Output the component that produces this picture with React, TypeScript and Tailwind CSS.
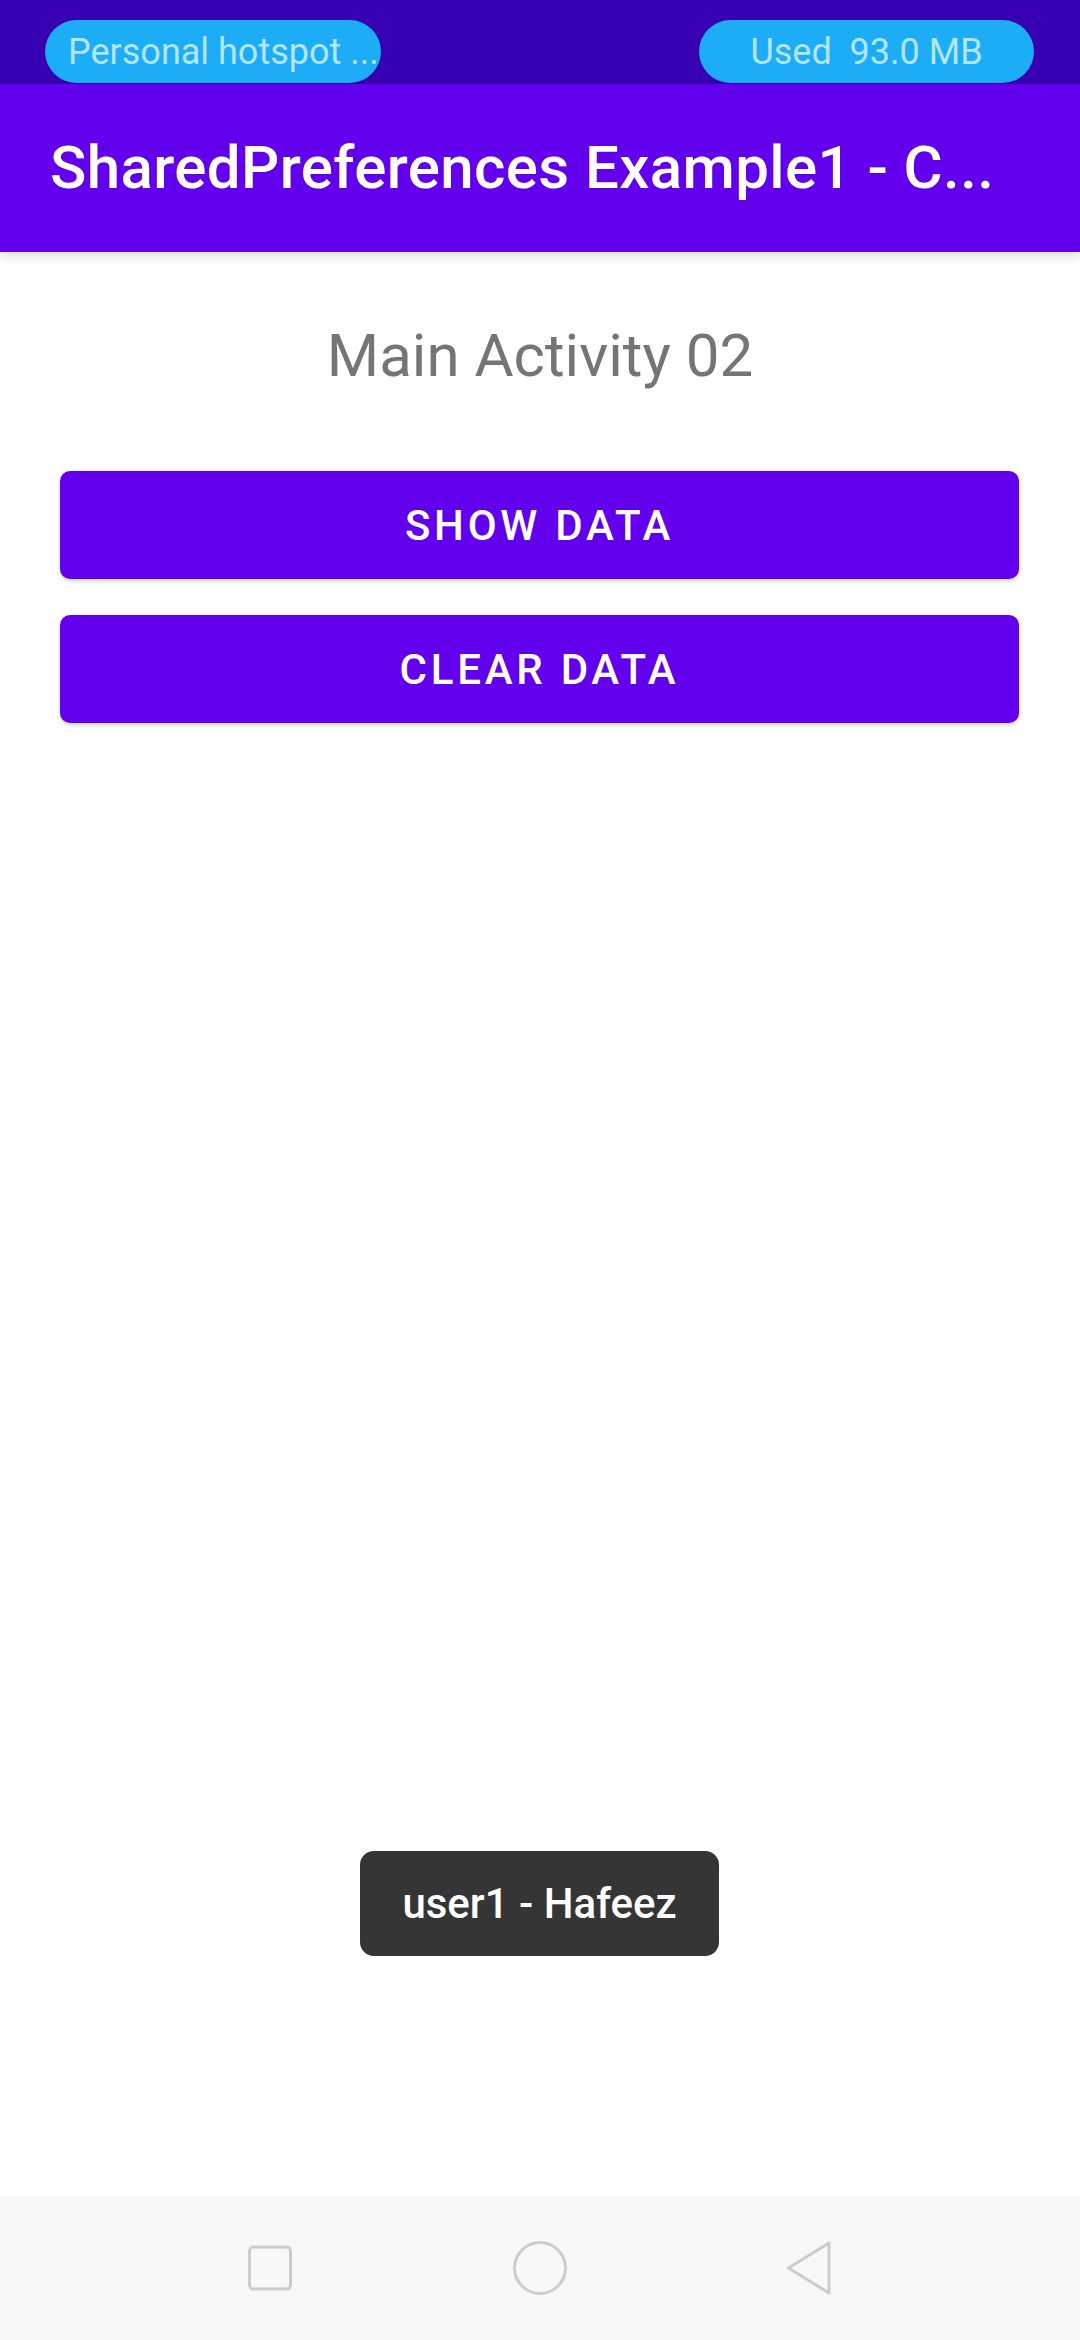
import React from "react";

export default function App() {
  return (
    <div
      className="relative w-[1080px] h-[2340px] bg-white flex flex-col overflow-hidden"
      style={{ fontFamily: "Roboto, 'Noto Sans', sans-serif" }}
    >
      {/* Status bar */}
      <div className="h-[84px] bg-[#3700B3] flex justify-between items-start pt-[20px] pl-[45px] pr-[46px] shrink-0">
        <div className="w-[336px] h-[63px] rounded-full bg-[#1DADF6] flex items-center pl-[23px] text-[36px] leading-none text-[#B3E5FC] whitespace-pre">
          Personal hotspot ...
        </div>
        <div className="w-[335px] h-[63px] rounded-full bg-[#1DADF6] flex items-center justify-center text-[36px] leading-none text-[#B3E5FC] whitespace-pre">
          Used  93.0 MB
        </div>
      </div>

      {/* App bar */}
      <div className="relative z-10 h-[168px] bg-[#6200EE] flex items-center px-[50px] shrink-0 shadow-[0_4px_10px_rgba(0,0,0,0.15)]">
        <span className="text-[60px] font-medium tracking-[0.4px] text-white leading-none whitespace-pre">
          SharedPreferences Example1 - C...
        </span>
      </div>

      {/* Content */}
      <div className="flex flex-col flex-1">
        <div className="mt-[74px] text-center text-[60px] leading-none text-[#757575]">
          Main Activity 02
        </div>
        <button className="mt-[85px] ml-[60px] mr-[61px] h-[108px] rounded-[10px] bg-[#6200EE] text-white text-[42px] font-medium tracking-[3.75px] uppercase shadow-[0_2px_4px_rgba(0,0,0,0.2)]">
          SHOW DATA
        </button>
        <button className="mt-[36px] ml-[60px] mr-[61px] h-[108px] rounded-[10px] bg-[#6200EE] text-white text-[42px] font-medium tracking-[3.75px] uppercase shadow-[0_2px_4px_rgba(0,0,0,0.2)]">
          CLEAR DATA
        </button>
      </div>

      {/* Nav bar */}
      <div className="h-[144px] bg-[#F8F8F8] flex justify-center items-center shrink-0">
        <div className="w-[270px] flex justify-center">
          <svg width="48" height="48" viewBox="0 0 48 48">
            <rect x="3.5" y="3" width="41" height="42" rx="4" fill="none" stroke="#CCCCCC" strokeWidth="3" />
          </svg>
        </div>
        <div className="w-[270px] flex justify-center">
          <svg width="58" height="58" viewBox="0 0 58 58">
            <circle cx="29" cy="29" r="25.5" fill="none" stroke="#CCCCCC" strokeWidth="3" />
          </svg>
        </div>
        <div className="w-[270px] flex justify-center">
          <svg width="50" height="56" viewBox="0 0 50 56">
            <path
              d="M44 3 L44 53 L3.5 28 Z"
              fill="none"
              stroke="#CCCCCC"
              strokeWidth="3"
              strokeLinejoin="round"
            />
          </svg>
        </div>
      </div>

      {/* Toast */}
      <div className="absolute left-[360px] top-[1851px] w-[359px] h-[105px] rounded-[14px] bg-[#353535] flex items-center justify-center text-[42px] font-medium leading-none text-white">
        user1 - Hafeez
      </div>
    </div>
  );
}
